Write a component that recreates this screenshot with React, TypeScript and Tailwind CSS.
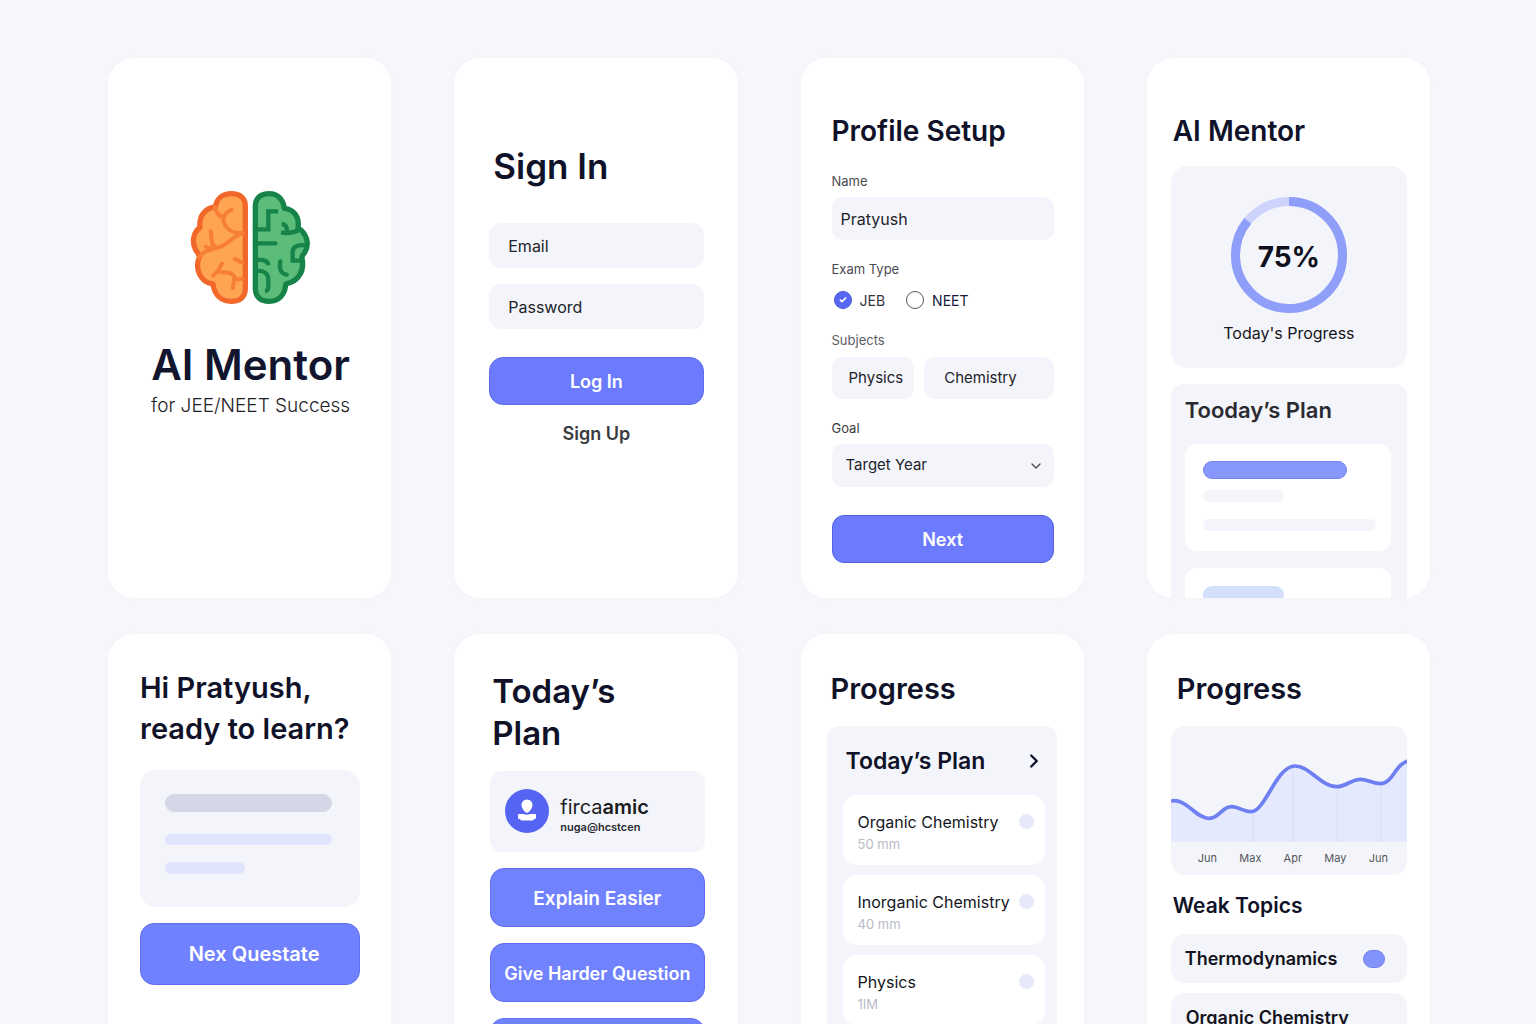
import type { ReactNode } from "react";
import { Check, ChevronDown, ChevronRight } from "lucide-react";

function Screen({ className, children }: { className: string; children: ReactNode }) {
  return (
    <section className={`flex flex-col rounded-[26px] bg-white shadow-[0_0_3px_rgba(240,242,250,0.9)] ${className}`}>
      {children}
    </section>
  );
}

function BrainLogo() {
  return (
    <svg viewBox="33 27 363 345" className="h-[115px] w-[121px]" fill="none" strokeLinecap="round" strokeLinejoin="round" aria-hidden="true">
      <path
        stroke="#f2682a"
        strokeWidth="16"
        fill="#ffa552"
        d="M199 76C199 50 182 38 157 38C132 38 113 52 109 78C82 80 59 102 63 139C44 153 37 182 50 207C55 214 59 220 62 226C46 260 62 304 102 309C106 341 126 361 157 361C182 361 199 349 199 322Z"
      />
      <g stroke="#f77f35" strokeWidth="12">
        <path d="M108 78C110 94 119 104 132 110" />
        <path d="M158 86C141 93 132 104 134 120C138 143 158 156 186 156" />
        <path d="M95 150C98 164 94 177 102 192M80 197C88 203 98 202 106 194" />
        <path d="M60 230C75 206 98 206 122 198C150 189 160 165 192 156" />
        <path d="M129 248C122 254 124 262 117 269L102 284M119 271C140 278 156 270 165 286C169 296 180 298 190 292M166 292L162 322" />
        <path d="M167 234C178 237 180 243 190 244" />
      </g>
      <path
        stroke="#168349"
        strokeWidth="16"
        fill="#5cbd7b"
        d="M229 76C229 50 246 38 271 38C296 38 313 56 316 82C344 85 362 107 357 141C383 156 393 189 377 215C370 221 368 225 369 232C377 269 359 302 320 309C319 340 300 361 271 361C246 361 229 349 229 322Z"
      />
      <g stroke="#168349" strokeWidth="13" strokeLinecap="butt" strokeLinejoin="miter">
        <path d="M297 91L268 91L268 145L229 145" />
        <path d="M229 187L289 187" strokeLinecap="round" />
        <path d="M308 129C322 130 324 139 324 153M306 155C330 158 346 154 360 147" />
        <path d="M380 194C362 190 341 194 341 212L341 239L366 239" />
        <path d="M233 237C254 235 267 239 268 253" />
        <path d="M234 270C256 268 268 278 268 296C268 314 271 330 258 330" />
        <path d="M304 241C300 262 304 278 323 281" strokeLinecap="round" />
      </g>
    </svg>
  );
}

function Splash() {
  return (
    <Screen className="items-center pt-[132px] pl-0.5">
      <BrainLogo />
      <h1 className="mt-[34px] text-[42px] leading-[52px] font-semibold text-[#12152e]">AI Mentor</h1>
      <p className="mt-[3px] text-[19px] leading-6 font-light text-[#1f2024]">for JEE/NEET Success</p>
    </Screen>
  );
}

function SignIn() {
  return (
    <Screen className="pt-[84px] pr-[34px] pl-[35px]">
      <h2 className="pl-1 text-[35px] leading-[48px] font-semibold">Sign In</h2>
      <input type="email" placeholder="Email" aria-label="Email" className="mt-[33px] h-[45px] rounded-xl bg-[#f4f5fa] px-[19px] text-base text-[#222329] outline-none placeholder:text-[#222329]" />
      <input type="password" placeholder="Password" aria-label="Password" className="mt-4 h-[45px] rounded-xl bg-[#f4f5fa] px-[19px] text-base text-[#222329] outline-none placeholder:text-[#222329]" />
      <button className="mt-7 h-12 rounded-[14px] border border-[#5f6cec] bg-[#6c7bfe] pt-0.5 text-lg font-semibold text-white">Log In</button>
      <a href="#signup" className="mt-[17px] self-center text-lg leading-6 font-semibold text-[#3a3b40]">Sign Up</a>
    </Screen>
  );
}

function Radio({ label, className, defaultChecked }: { label: string; className: string; defaultChecked?: boolean }) {
  return (
    <label className={`flex items-center gap-2 text-[14px] ${className}`}>
      <span className="relative flex size-[18px]">
        <input
          type="radio"
          name="exam"
          defaultChecked={defaultChecked}
          className="peer size-full appearance-none rounded-full border border-[#55565c] bg-white checked:border-[#4a55dd] checked:bg-[#5767f2]"
        />
        <Check className="pointer-events-none absolute top-[5px] left-[5px] hidden size-2 text-white peer-checked:block" strokeWidth={5} />
      </span>
      {label}
    </label>
  );
}

function ProfileSetup() {
  return (
    <Screen className="pt-[55px] pr-[30px] pb-[35px] pl-[31px]">
      <h2 className="text-[28px] leading-9 font-semibold">Profile Setup</h2>
      <label htmlFor="name" className="mt-[22px] text-[13px] leading-5 text-[#4a4b52]">Name</label>
      <input id="name" defaultValue="Pratyush" className="mt-1.5 h-[43px] rounded-[10px] bg-[#f4f5fa] px-[9px] text-base text-[#222329] outline-none" />
      <p className="mt-[19px] text-[13px] leading-5 text-[#4a4b52]">Exam Type</p>
      <div className="mt-[11px] flex h-5 gap-[21px] pl-0.5">
        <Radio label="JEB" className="text-[#34353c]" defaultChecked />
        <Radio label="NEET" className="text-[#171a3d]" />
      </div>
      <p className="mt-5 text-[13px] leading-5 text-[#5b5c63]">Subjects</p>
      <div className="mt-[7px] flex h-[42px] gap-[10px] text-[15px] text-[#222329]">
        <button className="rounded-[10px] bg-[#f4f5fa] pr-[11px] pl-[17px]">Physics</button>
        <button className="grow rounded-[10px] bg-[#f4f5fa] pl-5 text-left">Chemistry</button>
      </div>
      <label htmlFor="goal" className="mt-[19px] text-[13px] leading-5 text-[#3a3b42]">Goal</label>
      <div className="relative mt-1.5 flex h-[43px]">
        <select id="goal" className="grow appearance-none rounded-[10px] bg-[#f4f5fa] px-[14px] text-[15px] text-[#222329] outline-none">
          <option>Target Year</option>
        </select>
        <ChevronDown className="pointer-events-none absolute top-[14px] right-[10px] size-4 text-[#4a4b52]" strokeWidth={2} />
      </div>
      <button className="mt-7 h-12 rounded-xl border border-[#5360e0] bg-[#6c7bfe] pt-0.5 text-lg font-semibold text-white">Next</button>
    </Screen>
  );
}

function Home() {
  return (
    <Screen className="h-0 min-h-full overflow-hidden pt-[55px] pr-[23px] pl-6">
      <h2 className="shrink-0 pl-0.5 text-[28px] leading-9 font-semibold">AI Mentor</h2>
      <div className="mt-[17px] flex shrink-0 flex-col items-center rounded-2xl bg-[#f4f5fa] pt-[31px] pb-[23px]">
        <div className="relative flex size-[116px] items-center justify-center">
          <svg viewBox="0 0 116 116" className="absolute inset-0 -rotate-90" fill="none" strokeWidth="9" aria-hidden="true">
            <circle cx="58" cy="58" r="53.5" stroke="#cdd3fc" />
            <circle cx="58" cy="58" r="53.5" stroke="#8f9ff9" pathLength="100" strokeDasharray="86 100" />
          </svg>
          <span className="relative pt-1 text-[28px] leading-8 font-bold text-[#0e1020]">75%</span>
        </div>
        <p className="mt-2 text-base leading-6 text-[#16171d]">Today's Progress</p>
      </div>
      <div className="mt-4 shrink-0 rounded-t-xl bg-[#f4f5fa] pt-3 pr-4 pl-[14px]">
        <h3 className="text-[22px] leading-7 font-semibold text-[#2a2b31]">Tooday’s Plan</h3>
        <div className="mt-5 rounded-xl bg-white pt-[17px] pr-[15px] pb-5 pl-[18px]">
          <div className="h-[18px] w-5/6 rounded-full border border-[#7484f3] bg-[#8797fd]" />
          <div className="mt-[11px] h-3 w-[47%] rounded-full bg-[#f4f5fa]" />
          <div className="mt-[17px] h-3 rounded-full bg-[#f4f5fa]" />
        </div>
        <div className="mt-[17px] rounded-xl bg-white pt-[18px] pr-[15px] pb-5 pl-[18px]">
          <div className="h-[18px] w-[47%] rounded-full bg-[#d4dffc]" />
        </div>
      </div>
    </Screen>
  );
}

function Welcome() {
  return (
    <Screen className="pt-[33px] pr-[31px] pl-8">
      <h2 className="text-[29px] leading-[41px] font-semibold whitespace-nowrap">
        Hi Pratyush,
        <br />
        ready to learn?
      </h2>
      <div className="mt-[21px] rounded-2xl bg-[#f4f5fa] pt-6 pr-7 pb-[33px] pl-[25px]">
        <div className="h-[18px] rounded-full bg-[#d3d7e6]" />
        <div className="mt-[22px] h-[11px] rounded-full bg-[#e0e4fc]" />
        <div className="mt-[17px] h-3 w-[48%] rounded-full bg-[#e0e4fc]" />
      </div>
      <button className="mt-4 h-[62px] rounded-[14px] border border-[#5f6eec] bg-[#7081ff] pl-2 text-xl font-semibold text-white">Nex Questate</button>
    </Screen>
  );
}

function Avatar() {
  return (
    <svg viewBox="0 0 44 44" className="size-11 shrink-0" aria-hidden="true">
      <circle cx="22" cy="22" r="22" fill="#5564f2" />
      <path fill="#fff" d="M22 10.500a5.500 5.500 0 0 1 5.500 5.500c0 3-2 5-3.500 6.800a2.500 2.500 0 0 1-4 0c-1.500-1.800-3.500-3.800-3.500-6.800a5.500 5.500 0 0 1 5.500-5.500Z" />
      <path fill="#fff" d="M14 25h4.500q3.500 1.500 7 0H30q1 0 1 1v2.500q0 1.500-1.500 1.500l-2 1.500h-11l-2-1.500Q13 30 13 28.500V26q0-1 1-1Z" />
    </svg>
  );
}

function Tutor() {
  return (
    <Screen className="pt-9 pr-[33px] pb-8 pl-9">
      <h2 className="pl-0.5 text-[33px] leading-[42px] font-semibold">
        Today’s
        <br />
        Plan
      </h2>
      <div className="mt-[17px] flex h-[81px] items-center gap-[11px] rounded-xl bg-[#f4f5fa] pb-0.5 pl-[15px]">
        <Avatar />
        <div className="pt-2">
          <p className="text-xl leading-6 text-[#1b1c22]">
            firca<span className="font-semibold">amic</span>
          </p>
          <p className="text-[11px] leading-4 font-semibold text-[#2a2b31]">nuga@hcstcen</p>
        </div>
      </div>
      <div className="mt-4 flex flex-col gap-4 font-semibold whitespace-nowrap text-white">
        <button className="h-[59px] rounded-[14px] border border-[#5f6eec] bg-[#7182ff] pt-1 text-[19px]">Explain Easier</button>
        <button className="h-[59px] rounded-[14px] border border-[#5f6eec] bg-[#7182ff] pt-0.5 text-lg">Give Harder Question</button>
        <button aria-label="Next question" className="h-[59px] rounded-[14px] border border-[#5f6eec] bg-[#7182ff]" />
      </div>
    </Screen>
  );
}

const plan = [
  { topic: "Organic Chemistry", time: "50 mm" },
  { topic: "Inorganic Chemistry", time: "40 mm" },
  { topic: "Physics", time: "1IM" },
];

function PlanList() {
  return (
    <Screen className="pt-[37px] pr-[27px] pl-[26px]">
      <h2 className="pl-1 text-[29px] leading-9 font-semibold">Progress</h2>
      <div className="mt-[19px] grow rounded-t-xl bg-[#f4f5fa] pt-[19px] pr-3 pl-4">
        <div className="flex items-center justify-between pl-[3px]">
          <h3 className="text-[23px] leading-8 font-semibold">Today’s Plan</h3>
          <ChevronRight className="size-[22px]" strokeWidth={2.5} />
        </div>
        <ul className="mt-[18px] flex flex-col gap-[10px]">
          {plan.map((item) => (
            <li key={item.topic} className="flex items-start justify-between rounded-[14px] bg-white pt-[15px] pr-[11px] pb-[13px] pl-[15px]">
              <div>
                <p className="text-base leading-6 whitespace-nowrap text-[#15161c]">{item.topic}</p>
                <p className="mt-0.5 text-[13px] leading-4 text-[#b9bac6]">{item.time}</p>
              </div>
              <span className="mt-1 size-[15px] shrink-0 rounded-full bg-[#e7e9f8]" />
            </li>
          ))}
        </ul>
      </div>
    </Screen>
  );
}

const curve =
  "M0 225C45 215 75 277 112 277C147 277 150 242 182 242C205 242 215 257 240 257C283 257 315 120 372 120C415 120 450 182 497 182C525 182 540 160 568 160C590 160 605 173 628 173C665 173 670 115 712 104";

function ProgressChart() {
  return (
    <div className="mt-[19px] overflow-hidden rounded-[14px] bg-[#f4f5fa] pb-[9px]">
      <svg viewBox="0 0 708 348" preserveAspectRatio="none" className="h-[116px] w-full" fill="none" aria-hidden="true">
        <path d={`${curve}V348H0Z`} fill="#e5e9fe" />
        <path d="M247 257V348M366 122V348M498 184V348M629 174V348" stroke="#dbdff8" strokeWidth="3" />
        <path d={curve} stroke="#6e7ff2" strokeWidth="11" />
      </svg>
      <div className="mt-2 flex justify-between pr-[19px] pl-[27px] text-[11px] leading-4 text-[#55565d]">
        <span>Jun</span>
        <span>Max</span>
        <span>Apr</span>
        <span>May</span>
        <span>Jun</span>
      </div>
    </div>
  );
}

function Analytics() {
  return (
    <Screen className="pt-[37px] pr-[23px] pb-8 pl-6">
      <h2 className="pl-1.5 text-[29px] leading-9 font-semibold">Progress</h2>
      <ProgressChart />
      <h3 className="mt-[17px] pl-0.5 text-[21px] leading-7 font-semibold">Weak Topics</h3>
      <ul className="mt-[14px] flex flex-col gap-[10px] text-lg font-semibold text-[#12131c]">
        <li className="flex h-[49px] items-center justify-between rounded-[14px] bg-[#f4f5fa] pr-[22px] pl-[14px]">
          Thermodynamics
          <span className="h-[18px] w-[22px] rounded-[9px] border border-[#7282ee] bg-[#8292fb]" />
        </li>
        <li className="flex h-[49px] items-center rounded-[14px] bg-[#f4f5fa] pl-[15px]">Organic Chemistry</li>
      </ul>
    </Screen>
  );
}

export default function App() {
  return (
    <main className="h-screen overflow-hidden bg-[#f5f7fb] font-['Inter',sans-serif] text-[#0f1228]">
      <div className="grid grid-cols-4 gap-x-[63px] gap-y-9 pt-[58px] pr-[106px] pl-[108px]">
        <Splash />
        <SignIn />
        <ProfileSetup />
        <Home />
        <Welcome />
        <Tutor />
        <PlanList />
        <Analytics />
      </div>
    </main>
  );
}
